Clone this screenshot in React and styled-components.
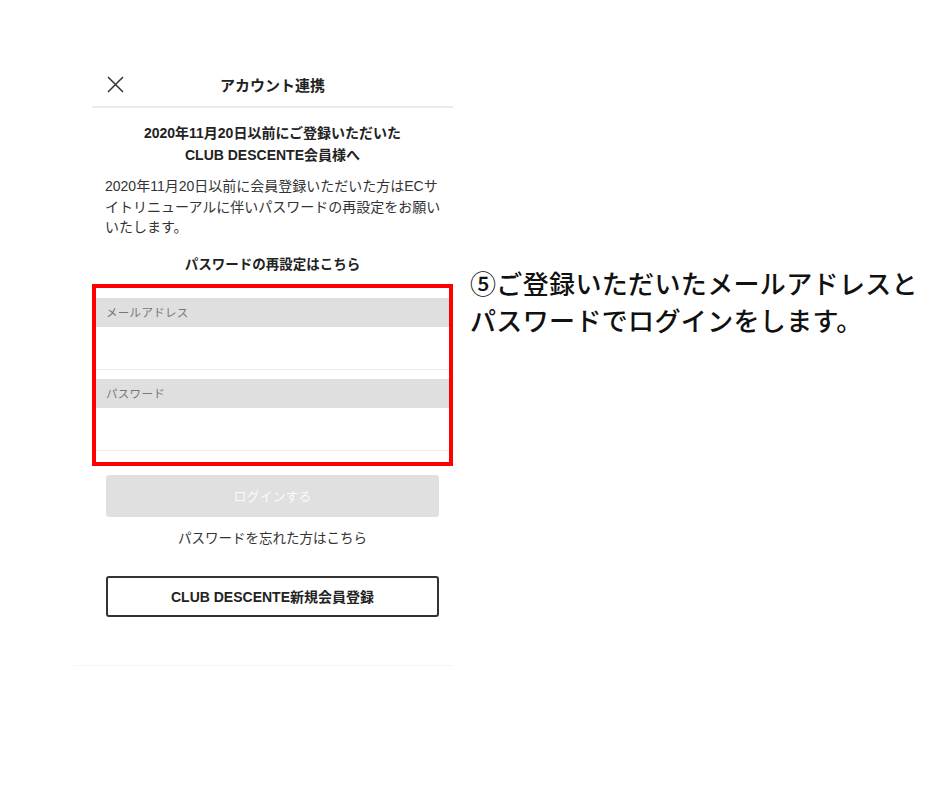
import React from "react";
import styled, { createGlobalStyle } from "styled-components";

const Global = createGlobalStyle`
  html, body { margin: 0; padding: 0; background: #fff; }
  body { font-family: "Noto Sans CJK JP", "Noto Sans", sans-serif; color: #222; }
`;

const Page = styled.div`
  width: 940px;
  height: 788px;
  display: flex;
  align-items: flex-start;
  padding-top: 65px;
  box-sizing: border-box;
`;

const Phone = styled.div`
  margin-left: 73px;
  width: 380px;
  padding-left: 19px;
  box-sizing: border-box;
  display: flex;
  flex-direction: column;
  border-bottom: 1px solid #f6f6f6;
  padding-bottom: 48px;
  font-family: "Liberation Sans", "Noto Sans CJK JP", sans-serif;
`;

const Header = styled.div`
  height: 41px;
  border-bottom: 2px solid #ebebeb;
  display: grid;
  grid-template-columns: 40px 1fr 40px;
  align-items: center;
`;

const Close = styled.button`
  border: 0;
  background: none;
  padding: 0;
  margin-left: 15px;
  width: 17px;
  height: 17px;
  display: flex;
  margin-top: -2px;
`;

const Title = styled.div`
  text-align: center;
  font-size: 15px;
  font-weight: 700;
  color: #222;
  margin-top: -2px;
`;

const Heading = styled.div`
  margin-top: 14px;
  text-align: center;
  font-size: 14px;
  font-weight: 700;
  line-height: 22px;
  color: #222;
`;

const Para = styled.p`
  margin: 10px 0 0 13px;
  font-size: 14px;
  line-height: 20.5px;
  color: #333;
  white-space: nowrap;
`;

const SubHeading = styled.div`
  margin-top: 17px;
  text-align: center;
  font-size: 13.5px;
  font-weight: 700;
  line-height: 20px;
  color: #222;
`;

const Highlight = styled.div`
  margin-top: 9px;
  border: 4px solid #ff0000;
  padding: 10px 0 11px;
  display: flex;
  flex-direction: column;
  gap: 9px;
`;

const Field = styled.div`
  display: flex;
  flex-direction: column;
`;

const Label = styled.div`
  height: 29px;
  background: #dfdfdf;
  display: flex;
  align-items: center;
  padding-left: 10px;
  font-size: 11.5px;
  letter-spacing: 0.3px;
  color: #777;
`;

const Input = styled.div`
  height: 42px;
  border-bottom: 1px solid #ececec;
  background: #fff;
`;

const LoginButton = styled.button`
  margin: 9px 14px 0;
  height: 42px;
  border: 0;
  border-radius: 3px;
  background: #e0e0e0;
  color: #fafafa;
  font-family: inherit;
  font-size: 13px;
`;

const Forgot = styled.div`
  margin-top: 12px;
  text-align: center;
  font-size: 13.5px;
  line-height: 20px;
  color: #333;
`;

const RegisterButton = styled.button`
  margin: 27px 14px 0;
  height: 41px;
  border: 2px solid #333;
  border-radius: 3px;
  background: #fff;
  color: #222;
  font-family: inherit;
  font-size: 14px;
  font-weight: 700;
`;

const Caption = styled.div`
  margin-top: 199px;
  margin-left: 17px;
  font-size: 26px;
  line-height: 37px;
  font-weight: 500;
  letter-spacing: 0.35px;
  color: #111;
  white-space: nowrap;
`;

export default function App() {
  return (
    <>
      <Global />
      <Page>
        <Phone>
          <Header>
            <Close aria-label="close">
              <svg width="17" height="17" viewBox="0 0 17 17">
                <path d="M1 1 L16 16 M16 1 L1 16" stroke="#333" strokeWidth="1.5" fill="none" />
              </svg>
            </Close>
            <Title>アカウント連携</Title>
            <span />
          </Header>
          <Heading>
            2020年11月20日以前にご登録いただいた
            <br />
            CLUB DESCENTE会員様へ
          </Heading>
          <Para>
            2020年11月20日以前に会員登録いただいた方はECサ
            <br />
            イトリニューアルに伴いパスワードの再設定をお願い
            <br />
            いたします。
          </Para>
          <SubHeading>パスワードの再設定はこちら</SubHeading>
          <Highlight>
            <Field>
              <Label>メールアドレス</Label>
              <Input />
            </Field>
            <Field>
              <Label>パスワード</Label>
              <Input />
            </Field>
          </Highlight>
          <LoginButton>ログインする</LoginButton>
          <Forgot>パスワードを忘れた方はこちら</Forgot>
          <RegisterButton>CLUB DESCENTE新規会員登録</RegisterButton>
        </Phone>
        <Caption>
          ⑤ご登録いただいたメールアドレスと
          <br />
          パスワードでログインをします。
        </Caption>
      </Page>
    </>
  );
}
